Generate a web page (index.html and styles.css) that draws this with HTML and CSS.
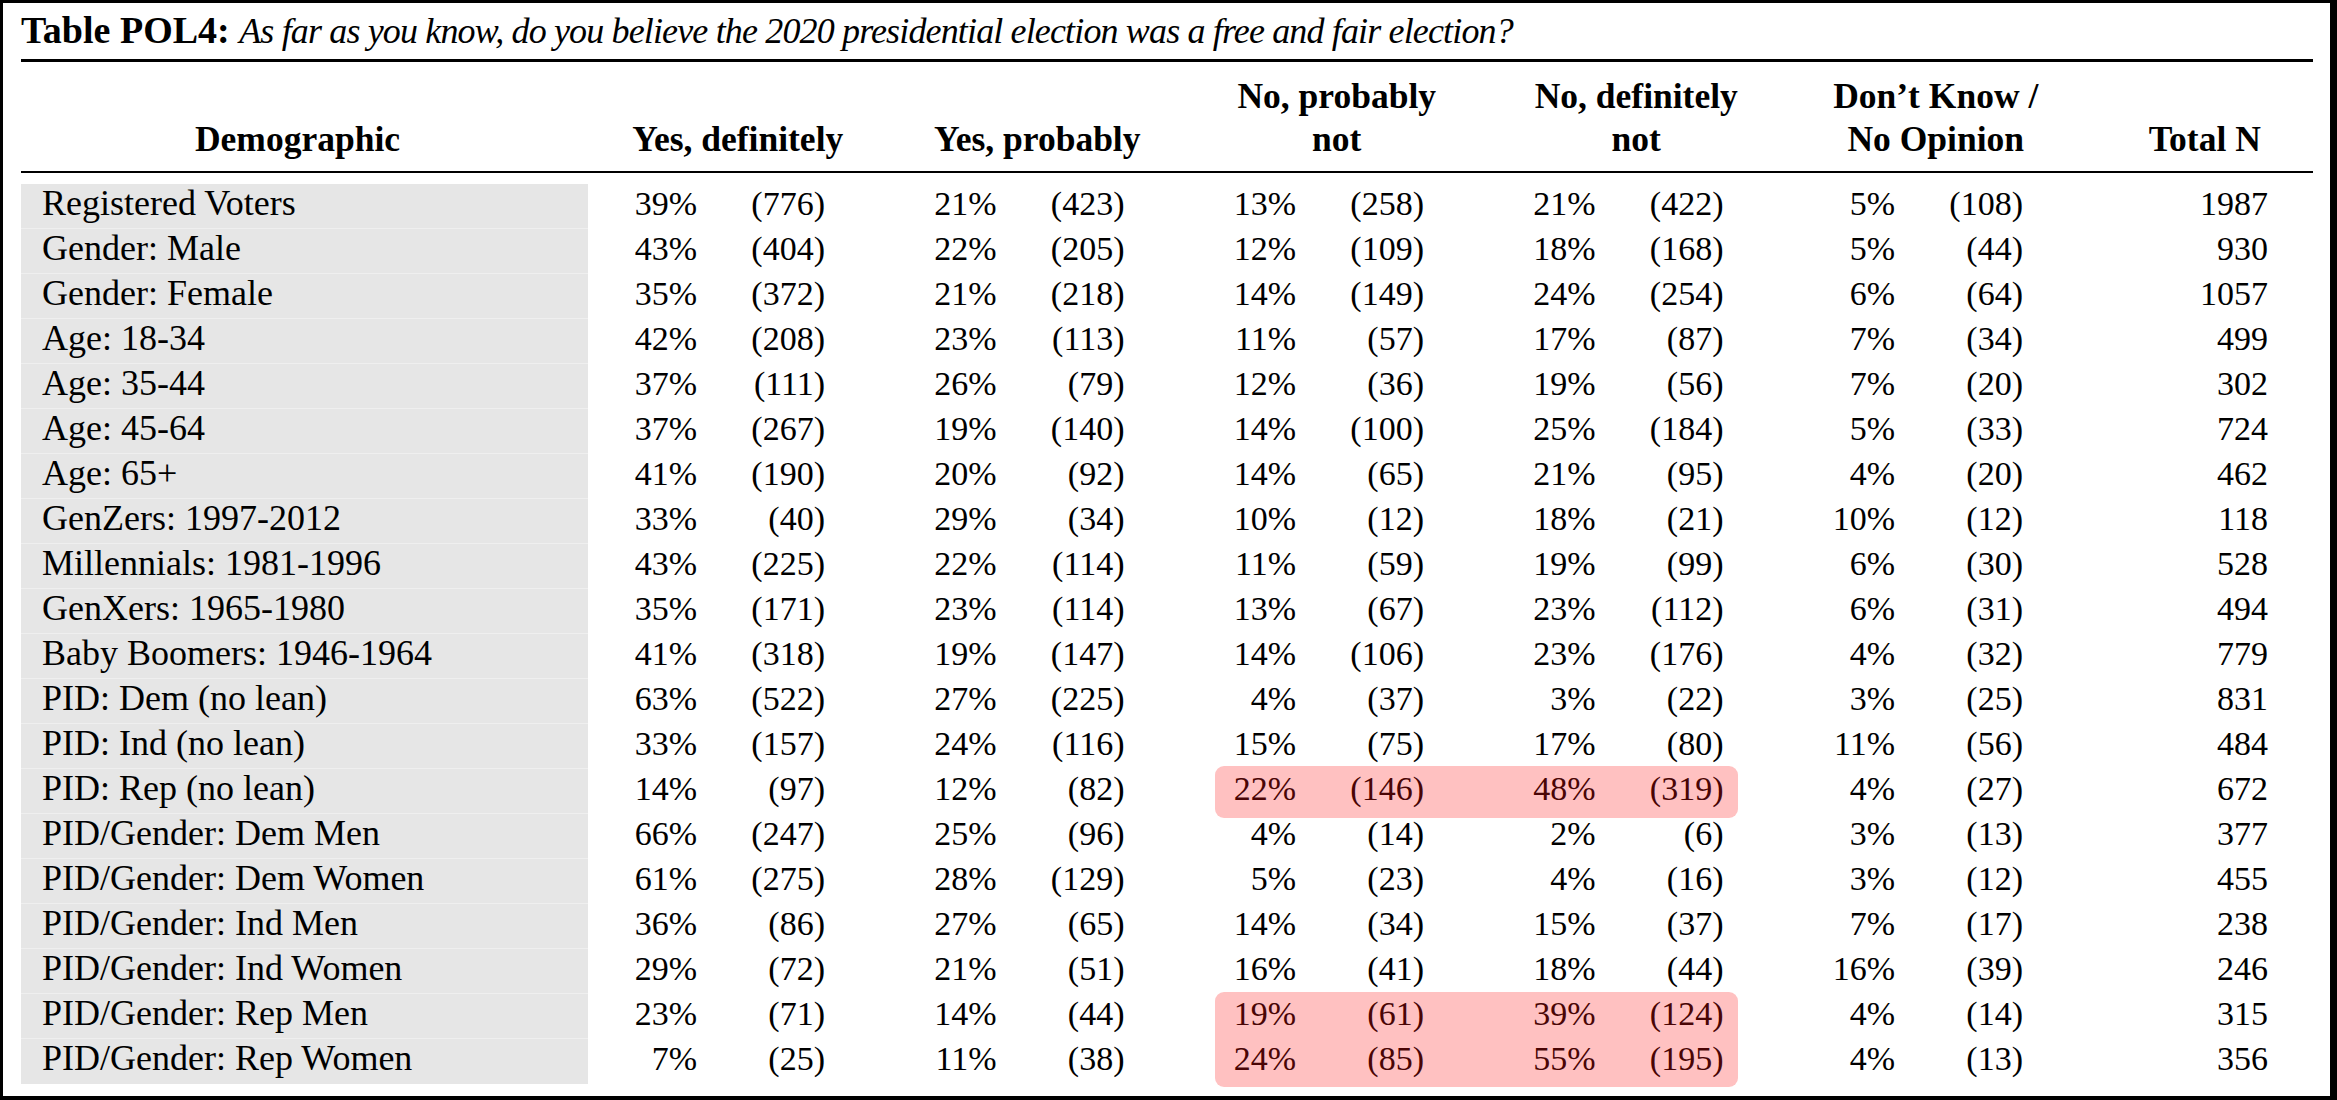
FILE: index.html
```html
<!DOCTYPE html>
<html lang="en">
<head>
<meta charset="utf-8">
<title>Table POL4</title>
<link rel="stylesheet" href="styles.css">
</head>
<body>
<div class="frame">
  <div class="title"><b>Table POL4:</b> <i>As far as you know, do you believe the 2020 presidential election was a free and fair election?</i></div>
  <div class="head">
    <div class="h h-demo">Demographic</div>
    <div class="h h-col">Yes, definitely</div>
    <div class="h h-col">Yes, probably</div>
    <div class="h h-col">No, probably<br>not</div>
    <div class="h h-col">No, definitely<br>not</div>
    <div class="h h-col">Don’t Know /<br>No Opinion</div>
    <div class="h h-total">Total N</div>
  </div>
  <div class="body">
    <div class="row"><div class="demo">Registered Voters</div><div class="p">39%</div><div class="n">(776)</div><div class="p">21%</div><div class="n">(423)</div><div class="p">13%</div><div class="n">(258)</div><div class="p">21%</div><div class="n">(422)</div><div class="p">5%</div><div class="n">(108)</div><div class="t">1987</div></div>
    <div class="row"><div class="demo">Gender: Male</div><div class="p">43%</div><div class="n">(404)</div><div class="p">22%</div><div class="n">(205)</div><div class="p">12%</div><div class="n">(109)</div><div class="p">18%</div><div class="n">(168)</div><div class="p">5%</div><div class="n">(44)</div><div class="t">930</div></div>
    <div class="row"><div class="demo">Gender: Female</div><div class="p">35%</div><div class="n">(372)</div><div class="p">21%</div><div class="n">(218)</div><div class="p">14%</div><div class="n">(149)</div><div class="p">24%</div><div class="n">(254)</div><div class="p">6%</div><div class="n">(64)</div><div class="t">1057</div></div>
    <div class="row"><div class="demo">Age: 18-34</div><div class="p">42%</div><div class="n">(208)</div><div class="p">23%</div><div class="n">(113)</div><div class="p">11%</div><div class="n">(57)</div><div class="p">17%</div><div class="n">(87)</div><div class="p">7%</div><div class="n">(34)</div><div class="t">499</div></div>
    <div class="row"><div class="demo">Age: 35-44</div><div class="p">37%</div><div class="n">(111)</div><div class="p">26%</div><div class="n">(79)</div><div class="p">12%</div><div class="n">(36)</div><div class="p">19%</div><div class="n">(56)</div><div class="p">7%</div><div class="n">(20)</div><div class="t">302</div></div>
    <div class="row"><div class="demo">Age: 45-64</div><div class="p">37%</div><div class="n">(267)</div><div class="p">19%</div><div class="n">(140)</div><div class="p">14%</div><div class="n">(100)</div><div class="p">25%</div><div class="n">(184)</div><div class="p">5%</div><div class="n">(33)</div><div class="t">724</div></div>
    <div class="row"><div class="demo">Age: 65+</div><div class="p">41%</div><div class="n">(190)</div><div class="p">20%</div><div class="n">(92)</div><div class="p">14%</div><div class="n">(65)</div><div class="p">21%</div><div class="n">(95)</div><div class="p">4%</div><div class="n">(20)</div><div class="t">462</div></div>
    <div class="row"><div class="demo">GenZers: 1997-2012</div><div class="p">33%</div><div class="n">(40)</div><div class="p">29%</div><div class="n">(34)</div><div class="p">10%</div><div class="n">(12)</div><div class="p">18%</div><div class="n">(21)</div><div class="p">10%</div><div class="n">(12)</div><div class="t">118</div></div>
    <div class="row"><div class="demo">Millennials: 1981-1996</div><div class="p">43%</div><div class="n">(225)</div><div class="p">22%</div><div class="n">(114)</div><div class="p">11%</div><div class="n">(59)</div><div class="p">19%</div><div class="n">(99)</div><div class="p">6%</div><div class="n">(30)</div><div class="t">528</div></div>
    <div class="row"><div class="demo">GenXers: 1965-1980</div><div class="p">35%</div><div class="n">(171)</div><div class="p">23%</div><div class="n">(114)</div><div class="p">13%</div><div class="n">(67)</div><div class="p">23%</div><div class="n">(112)</div><div class="p">6%</div><div class="n">(31)</div><div class="t">494</div></div>
    <div class="row"><div class="demo">Baby Boomers: 1946-1964</div><div class="p">41%</div><div class="n">(318)</div><div class="p">19%</div><div class="n">(147)</div><div class="p">14%</div><div class="n">(106)</div><div class="p">23%</div><div class="n">(176)</div><div class="p">4%</div><div class="n">(32)</div><div class="t">779</div></div>
    <div class="row"><div class="demo">PID: Dem (no lean)</div><div class="p">63%</div><div class="n">(522)</div><div class="p">27%</div><div class="n">(225)</div><div class="p">4%</div><div class="n">(37)</div><div class="p">3%</div><div class="n">(22)</div><div class="p">3%</div><div class="n">(25)</div><div class="t">831</div></div>
    <div class="row"><div class="demo">PID: Ind (no lean)</div><div class="p">33%</div><div class="n">(157)</div><div class="p">24%</div><div class="n">(116)</div><div class="p">15%</div><div class="n">(75)</div><div class="p">17%</div><div class="n">(80)</div><div class="p">11%</div><div class="n">(56)</div><div class="t">484</div></div>
    <div class="row"><div class="demo">PID: Rep (no lean)</div><div class="p">14%</div><div class="n">(97)</div><div class="p">12%</div><div class="n">(82)</div><div class="hl hl-solo"><div class="p p-in">22%</div><div class="n">(146)</div><div class="p">48%</div><div class="n n-in">(319)</div></div><div class="p">4%</div><div class="n">(27)</div><div class="t">672</div></div>
    <div class="row"><div class="demo">PID/Gender: Dem Men</div><div class="p">66%</div><div class="n">(247)</div><div class="p">25%</div><div class="n">(96)</div><div class="p">4%</div><div class="n">(14)</div><div class="p">2%</div><div class="n">(6)</div><div class="p">3%</div><div class="n">(13)</div><div class="t">377</div></div>
    <div class="row"><div class="demo">PID/Gender: Dem Women</div><div class="p">61%</div><div class="n">(275)</div><div class="p">28%</div><div class="n">(129)</div><div class="p">5%</div><div class="n">(23)</div><div class="p">4%</div><div class="n">(16)</div><div class="p">3%</div><div class="n">(12)</div><div class="t">455</div></div>
    <div class="row"><div class="demo">PID/Gender: Ind Men</div><div class="p">36%</div><div class="n">(86)</div><div class="p">27%</div><div class="n">(65)</div><div class="p">14%</div><div class="n">(34)</div><div class="p">15%</div><div class="n">(37)</div><div class="p">7%</div><div class="n">(17)</div><div class="t">238</div></div>
    <div class="row"><div class="demo">PID/Gender: Ind Women</div><div class="p">29%</div><div class="n">(72)</div><div class="p">21%</div><div class="n">(51)</div><div class="p">16%</div><div class="n">(41)</div><div class="p">18%</div><div class="n">(44)</div><div class="p">16%</div><div class="n">(39)</div><div class="t">246</div></div>
    <div class="row"><div class="demo">PID/Gender: Rep Men</div><div class="p">23%</div><div class="n">(71)</div><div class="p">14%</div><div class="n">(44)</div><div class="hl hl-top"><div class="p p-in">19%</div><div class="n">(61)</div><div class="p">39%</div><div class="n n-in">(124)</div></div><div class="p">4%</div><div class="n">(14)</div><div class="t">315</div></div>
    <div class="row"><div class="demo">PID/Gender: Rep Women</div><div class="p">7%</div><div class="n">(25)</div><div class="p">11%</div><div class="n">(38)</div><div class="hl hl-bottom"><div class="p p-in">24%</div><div class="n">(85)</div><div class="p">55%</div><div class="n n-in">(195)</div></div><div class="p">4%</div><div class="n">(13)</div><div class="t">356</div></div>
  </div>
</div>
</body>
</html>
```

FILE: styles.css
```css
html, body {
  margin: 0;
  padding: 0;
  background: #ffffff;
}

body {
  font-family: "Liberation Serif", "Times New Roman", serif;
  color: #000000;
}

.frame {
  box-sizing: border-box;
  width: 2337px;
  height: 1100px;
  border-style: solid;
  border-color: #000000;
  border-width: 3px 7px 4px 3px;
  padding: 0 17px 0 18px;
  background: #ffffff;
}

.title {
  font-size: 38px;
  line-height: 44px;
  padding-top: 5px;
  padding-bottom: 6px;
  border-bottom: 3px solid #000000;
  white-space: nowrap;
}

.title b {
  font-weight: bold;
}

.title i {
  font-style: italic;
  font-size: 36px;
  letter-spacing: -0.85px;
}

.head {
  display: flex;
  align-items: flex-end;
  padding-top: 13px;
  padding-bottom: 10px;
  border-bottom: 2px solid #000000;
  font-size: 35.5px;
  line-height: 43px;
  font-weight: bold;
}

.h {
  text-align: center;
  white-space: nowrap;
}

.h-demo {
  box-sizing: border-box;
  width: 567px;
  padding-right: 14px;
}

.h-col {
  width: 299.5px;
}

.h-total {
  flex: 1;
  padding-left: 11px;
}

.body {
  margin-top: 11px;
}

.row {
  display: flex;
  height: 45px;
  font-size: 34px;
  line-height: 40px;
  white-space: nowrap;
}

.demo {
  box-sizing: border-box;
  width: 567px;
  padding-left: 21px;
  font-size: 36px;
  line-height: 39px;
  background: #e6e6e6;
  border-bottom: 1px solid #efefef;
}

.row:last-child .demo {
  border-bottom: none;
}

.p {
  box-sizing: border-box;
  width: 109px;
  text-align: right;
}

.n {
  box-sizing: border-box;
  width: 190.5px;
  padding-right: 62.5px;
  text-align: right;
}

.t {
  box-sizing: border-box;
  flex: 1;
  padding-right: 45px;
  text-align: right;
}

.hl {
  display: flex;
  margin-left: 28px;
  margin-right: 48.5px;
  background: #ffc1c1;
  color: #4a0505;
}

.hl-solo {
  margin-top: -3px;
  margin-bottom: -4px;
  padding-top: 3px;
  border-radius: 9px;
}

.hl-top {
  margin-top: -2px;
  padding-top: 2px;
  border-radius: 9px 9px 0 0;
}

.hl-bottom {
  margin-bottom: -3px;
  border-radius: 0 0 9px 9px;
}

.p-in {
  width: 81px;
}

.n-in {
  width: 142px;
  padding-right: 14px;
}
```
